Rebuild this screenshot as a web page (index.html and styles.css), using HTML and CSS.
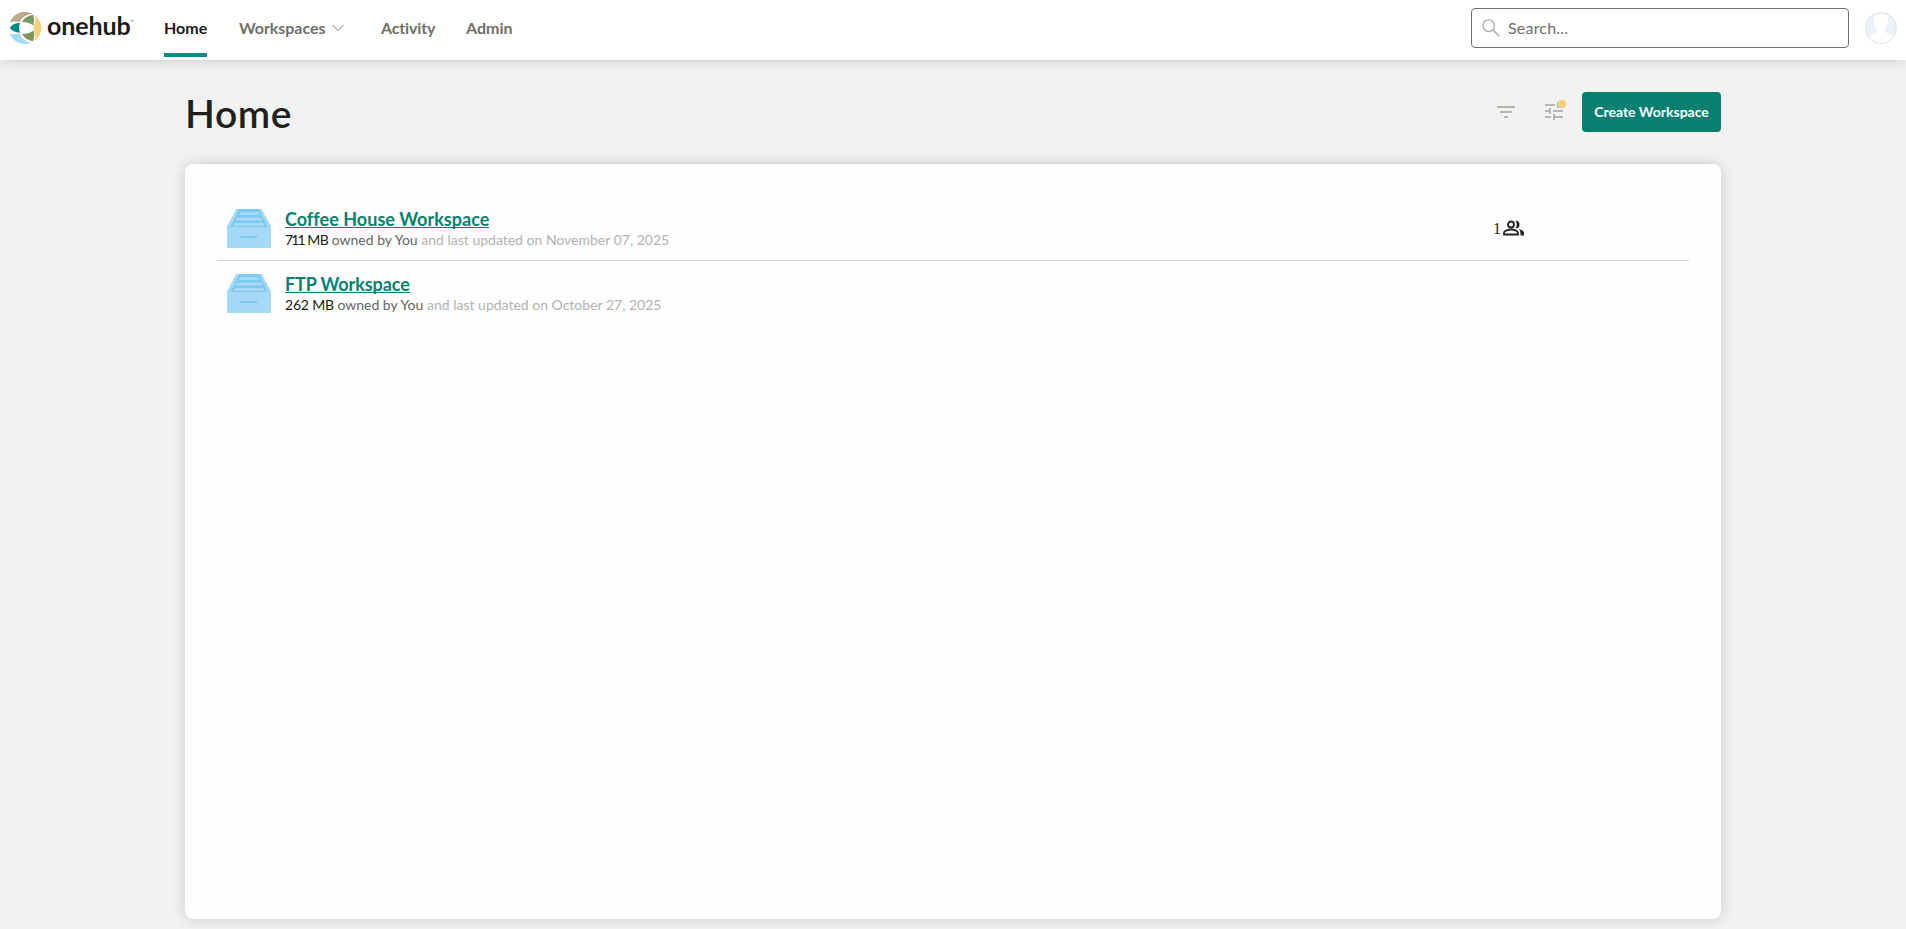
FILE: index.html
```html
<!DOCTYPE html>
<html lang="en">
<head>
<meta charset="utf-8">
<title>Home - Onehub</title>
<link rel="stylesheet" href="styles.css">
</head>
<body>
<svg class="defs" width="0" height="0" aria-hidden="true">
  <symbol id="drawer" viewBox="0 0 44 39">
    <path fill="#7cc9f1" d="M9.500 0h25L44 18H0z"/>
    <path fill="#a5d9f5" d="M9.500 0H12L3.500 18H0zM34.500 0H32l8.500 18H44zM13 3h18l1 3H12zM10 8.500h24l1.200 3H8.800zM8 14h28l1.500 3h-31zM0 18h44v21H0z"/>
    <path stroke="#7cc9f1" stroke-width="2" stroke-linecap="round" d="M14.500 28h15"/>
  </symbol>
</svg>
<header class="topbar">
  <a class="brand">
    <svg class="brand-mark" viewBox="0 0 32 32" width="32" height="32">
      <path fill="#baaa88" d="M.8 10.500A16 16 0 0 1 23.500 1.800Q14 3 10.500 10Q5.500 9 .8 10.500z"/>
      <path fill="#f6cf7e" d="M25.500 2.800A16 16 0 0 1 25 29.300Q27.500 24 25.500 20Q23.500 16 25.500 12Q27.300 7 25.500 2.800z"/>
      <path fill="#a9daf3" d="M.8 21.500Q5 22.500 10.500 21.500Q13 28 21.500 31A16 16 0 0 1 .8 21.500z"/>
      <path fill="#008a87" d="M.7 15.800Q4 11 11 10.800Q9 15.500 11 20.800Q4 20.500 .7 15.800z"/>
      <path fill="#7a985f" d="M12.800 10Q16 4 24.300 2.800Q26 8 24.300 13.500Q19.500 9.500 12.800 10z"/>
      <path fill="#7d945c" d="M13 22Q20 22 24.500 18.500Q26.500 24 23.800 29.200Q16.500 28 13 22z"/>
    </svg>
    <span class="brand-name">onehub</span><span class="brand-tm">™</span>
  </a>
  <nav class="nav">
    <a class="nav-link nav-home">Home</a>
    <a class="nav-link nav-workspaces">Workspaces</a>
    <svg class="chevron" width="12" height="8" viewBox="0 0 12 8" fill="none" stroke="#b0b0b0" stroke-width="1.200"><path d="M.6 1 6 6.600 11.400 1"/></svg>
    <a class="nav-link nav-activity">Activity</a>
    <a class="nav-link nav-admin">Admin</a>
  </nav>
  <div class="search">
    <svg width="18" height="18" viewBox="0 0 18 18" fill="none" stroke="#aaa" stroke-width="1.400"><circle cx="6.700" cy="6.700" r="5.800"/><path d="m11 11 6.300 6.300"/></svg>
    <span class="search-text">Search...</span>
  </div>
  <svg class="avatar" width="32" height="32" viewBox="0 0 32 32">
    <circle cx="16" cy="16" r="15.500" fill="#edf2f8"/>
    <path fill="#fff" d="M3.500 25.500Q5 23 10.500 21Q12.500 20 12 17.500Q9.500 14 8.600 10Q8 2.500 15.500 2Q24 2 23 10Q22.500 14.500 20 17.500Q19.500 20 21.500 21Q27 23 28.500 25.500A15.500 15.500 0 0 1 3.500 25.500z"/>
    <circle cx="16" cy="16" r="15.500" fill="none" stroke="#dfe3e6" stroke-width="1"/>
  </svg>
</header>
<main class="page">
  <div class="heading">
    <h1 class="title">Home</h1>
    <svg class="filter" width="18" height="12" viewBox="0 0 18 12" fill="#b5b5b5"><path fill="#b5b3a8" d="M0 0h18v2H0z"/><path d="M3 5h12v2H3zM7 10h4v2H7z"/></svg>
    <svg class="tune" width="22" height="22" viewBox="0 0 22 22">
      <path fill="#b5b5b5" d="M0 5h10v2H0zM12 3h2v6h-2zM14 5h4v2h-4zM0 11h4V9h2v6H4v-2H0zM8 11h10v2H8zM0 17h6v2H0zM8 15h2v2h8v2h-8v2H8z"/>
      <circle cx="17" cy="5" r="4.200" fill="#f6cf7c"/>
    </svg>
    <button class="create">Create Workspace</button>
  </div>
  <section class="card">
    <article class="row row-ruled">
      <svg class="drawer" width="44" height="39"><use href="#drawer"/></svg>
      <div class="info">
        <a class="name name-coffee">Coffee House Workspace</a>
        <p class="meta"><span class="size size-coffee"><span class="digits">711</span> MB</span> owned by You <span class="updated">and last updated on November 07, 2025</span></p>
      </div>
      <div class="members"><span class="member-count">1</span>
        <svg width="22" height="16" viewBox="0 0 22 16" fill="none" stroke="#202326" stroke-width="1.800"><circle cx="8" cy="4.500" r="3"/><path d="M1 14.500v-1.700C1 10.500 5.500 9.500 8 9.500s7 1 7 3.300v1.700z"/><path fill="#202326" stroke="none" d="M12.500.7Q16.500.3 16.500 4.500T12.500 8.300Q15 4.500 12.500.7zM15.500 9.200Q21 10 21 13v2.500h-3.500V13Q17.500 10.500 15.500 9.200z"/></svg>
      </div>
    </article>
    <article class="row">
      <svg class="drawer" width="44" height="39"><use href="#drawer"/></svg>
      <div class="info">
        <a class="name name-ftp">FTP Workspace</a>
        <p class="meta"><span class="size size-ftp">262 MB</span> owned by You <span class="updated">and last updated on October 27, 2025</span></p>
      </div>
    </article>
  </section>
</main>
</body>
</html>
```
FILE: styles.css
```css
* { box-sizing: border-box; }
body {
  margin: 0;
  height: 929px;
  overflow: hidden;
  background: #f0f3f2;
  color: #1f1f1b;
  font-family: Lato, "Open Sans", sans-serif;
}
svg { flex: none; display: block; }
.defs { position: absolute; }
.topbar {
  position: relative;
  display: flex;
  height: 60px;
  padding: 0 9px;
  background: #fff;
  box-shadow: 0 0 14px rgba(0, 0, 0, .17);
}
.brand { display: flex; width: 155px; padding-top: 12px; }
.brand-name {
  margin: -3px 0 0 6px;
  font: 700 25px/32px Lato, sans-serif;
  letter-spacing: -.1px;
  color: #1b1b1b;
}
.brand-tm { font-size: 4px; line-height: 20px; }
.nav { display: flex; height: 57px; }
.nav-link {
  flex: none;
  height: 57px;
  font-size: 16px;
  font-weight: 700;
  line-height: 55px;
  color: #6f6f68;
  white-space: nowrap;
}
.nav-home { width: 43px; margin-right: 32px; color: #1a1a18; border-bottom: 4px solid #078b87; }
.nav-workspaces { width: 87px; letter-spacing: -.05px; }
.chevron { margin: 24px 37px 0 6px; }
.nav-activity { width: 54px; margin-right: 31px; letter-spacing: -.15px; }
.search {
  display: flex;
  align-items: flex-start;
  width: 378px;
  height: 40px;
  margin: 8px 16px 0 auto;
  padding: 10px;
  border: 1px solid #70706f;
  border-radius: 4px;
}
.search-text { margin: -1px 0 0 8px; font-size: 16px; line-height: 20px; letter-spacing: .2px; color: #70706a; }
.avatar { margin-top: 12px; }
.page { width: 1536px; margin: 0 auto; }
.heading { display: flex; height: 104px; padding-top: 32px; }
.title {
  margin: -1px auto 0 0;
  font-size: 39px;
  font-weight: 600;
  line-height: 44px;
  letter-spacing: .6px;
}
.filter { margin: 14px 30px 0 0; }
.tune { margin: 7px 15px 0 0; }
.create {
  width: 139px;
  height: 40px;
  padding: 0;
  border: 0;
  border-radius: 4px;
  background: #088071;
  color: #fff;
  font: 700 14px/40px Lato, sans-serif;
  white-space: nowrap;
}
.card {
  height: 755px;
  padding: 32px;
  border-radius: 8px;
  background: #fefefe;
  box-shadow: 0 0 14px rgba(0, 0, 0, .17);
}
.row { display: flex; height: 65px; padding: 13px 10px 0; }
.row-ruled { border-bottom: 1px solid #d8d8d8; }
.info { margin-left: 14px; }
.name {
  display: block;
  width: max-content;
  height: 19px;
  border-bottom: 1px solid #088071;
  font-size: 18px;
  font-weight: 700;
  line-height: 20px;
  color: #088071;
}
.name-coffee { letter-spacing: .02px; }
.name-ftp { letter-spacing: -.08px; }
.meta { margin: 2px 0 0; font-size: 14px; line-height: 20px; color: #66665f; white-space: nowrap; }
.size { color: #1a1a18; }
.size-coffee { letter-spacing: -.6px; }
.digits { letter-spacing: -1.900px; margin-right: .6px; }
.size-ftp { letter-spacing: -.2px; }
.updated { color: #b2b3ae; }
.members {
  display: flex;
  width: 186px;
  margin: 11px 0 0 auto;
  font: 16px/17px "Liberation Serif", serif;
}
.member-count { width: 9.500px; }
```
